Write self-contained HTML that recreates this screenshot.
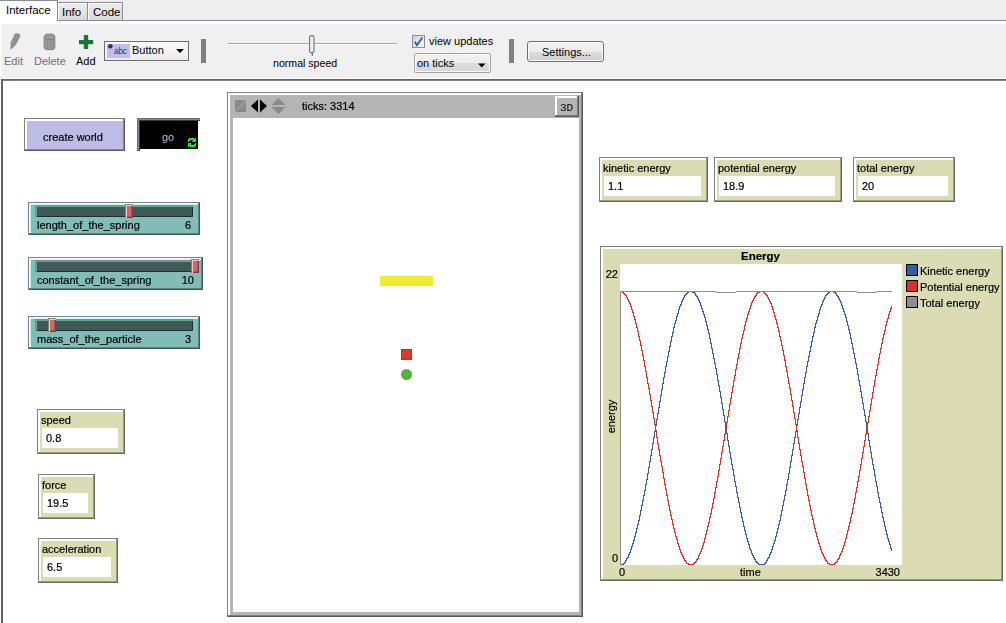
<!DOCTYPE html>
<html><head><meta charset="utf-8">
<style>
*{margin:0;padding:0;box-sizing:border-box}
html,body{width:1006px;height:623px;overflow:hidden;background:#fff;font-family:"Liberation Sans",sans-serif;font-size:11px;color:#000}
.a{position:absolute}
.t{position:absolute;white-space:nowrap;line-height:1}
/* tabs */
#top{left:0;top:0;width:1006px;height:20px;background:#eeeeee}
#tabline{left:57px;top:20px;width:949px;height:1px;background:#898d96}
#tabI{left:0;top:0;width:58px;height:21px;background:#fff;border-top:1px solid #898d96;border-right:1px solid #898d96}
.tab{top:2px;height:19px;border:1px solid #898d96;border-left:0;background:linear-gradient(#ededed,#d9d9d9);box-shadow:inset 1px 1px 0 #fff}
#toolbar{left:1px;top:24px;width:1005px;height:54px;background:#f0f0f0}
#tbline{left:1px;top:79px;width:1005px;height:1px;background:#646464}
#tbline2{left:1px;top:80px;width:1005px;height:1px;background:#7d828c}
#mainL{left:1px;top:79px;width:2px;height:544px;background:#646464}
/* bevel widgets */
.bev{position:absolute;border:1px solid #808080;border-right:0;border-bottom:0}
.bev>.in{position:absolute;left:0;top:0;right:0;bottom:0;border-top:2px solid #fff;border-left:2px solid #fff}
.mon .in{background:#dcdcb4;border-right:2px solid #66664e;border-bottom:2px solid #66664e}
.mon .lab{left:2px;top:3px}
.mon .val{position:absolute;left:2px;top:16px;background:#fff;height:20px}
.mon .val span{position:absolute;left:5px;top:6px;line-height:1}

.w{position:absolute;border-top:1px solid #808080;border-left:1px solid #808080}
</style></head><body>
<div class="a" id="top"></div>
<div class="a" id="tabI"></div>
<div class="a" id="tabline"></div>
<div class="a tab" style="left:58px;width:30px"></div>
<div class="a tab" style="left:88px;width:35px"></div>
<div class="t" style="left:6px;top:5px;font-size:11.5px">Interface</div>
<div class="t" style="left:62px;top:7px;font-size:11.5px">Info</div>
<div class="t" style="left:93px;top:7px;font-size:11.5px">Code</div>

<div class="a" id="toolbar"></div>
<div class="a" id="tbline"></div><div class="a" id="tbline2"></div>
<div class="a" id="mainL"></div>

<!-- toolbar -->
<svg class="a" style="left:0;top:30px" width="100" height="24" viewBox="0 30 100 24">
 <polygon points="11,49 11.2,42.4 15.2,34 18.7,34 20,35.7 15.5,44.7" fill="#939393" stroke="#808080" stroke-width="0.9" stroke-linejoin="round"/>
 <polygon points="46,34.2 53,34.2 54.8,36 54.8,48 53.3,49.6 45.7,49.6 44.2,48 44.2,36" fill="#9a9a9a" stroke="#7e7e7e" stroke-width="1"/>
 <path d="M44.8,38.8 Q49.5,40.6 54.3,38.8" stroke="#7e7e7e" stroke-width="1" fill="none"/>
 <path d="M47.3,41 V48.6 M50.3,41.2 V48.6 M52.8,41 V48.6" stroke="#888" stroke-width="0.8"/>
 <rect x="83.8" y="35" width="4.4" height="14" fill="#1c7830"/>
 <rect x="79" y="40" width="14.2" height="4.2" fill="#1c7830"/>
</svg>
<div class="t" style="left:4px;top:56px;color:#6e6e80">Edit</div>
<div class="t" style="left:34px;top:56px;color:#6e6e80">Delete</div>
<div class="t" style="left:76px;top:56px;color:#000">Add</div>

<div class="a" style="left:104px;top:41px;width:85px;height:20px;border:1px solid #6e6e6e;background:linear-gradient(#fafafa,#ebebeb)"></div>
<div class="a" style="left:107px;top:44px;width:23px;height:14px;background:#bfbfeb"></div>
<svg class="a" style="left:107px;top:43px" width="8" height="7"><circle cx="3.3" cy="3.3" r="2.3" fill="#303448"/><circle cx="3.3" cy="3.3" r="1" fill="#2030c0"/></svg>
<div class="t" style="left:114px;top:47px;font-size:8.5px;color:#383848;letter-spacing:-0.3px">abc</div>
<div class="t" style="left:132px;top:45px">Button</div>
<svg class="a" style="left:175px;top:48px" width="10" height="6"><polygon points="1,1 9,1 5,5" fill="#000"/></svg>
<div class="a" style="left:201px;top:39px;width:5px;height:24px;background:#808080"></div>

<div class="a" style="left:228px;top:43px;width:169px;height:1px;background:#a6a6a6"></div>
<div class="a" style="left:228px;top:44px;width:169px;height:1px;background:#fff"></div>
<svg class="a" style="left:306px;top:33px" width="12" height="24"><rect x="3.6" y="2.6" width="4.4" height="17" rx="1.8" fill="#fafafa" stroke="#6e6e6e" stroke-width="1.1"/><path d="M5.8,5 V17" stroke="#dcdcdc" stroke-width="0.8"/><path d="M6.3,20 V23" stroke="#6a6a6a" stroke-width="1.2"/></svg>
<div class="t" style="left:273px;top:58px;font-size:10.6px">normal speed</div>

<div class="a" style="left:412px;top:35px;width:13px;height:13px;border:1px solid #8e8f8f;background:linear-gradient(135deg,#cdd1d8,#f6f6f6)"></div>
<svg class="a" style="left:412px;top:35px" width="13" height="13"><path d="M2.8,6.8 L5,10.3 L10.3,2.6" stroke="#3450a0" stroke-width="1.7" fill="none"/></svg>
<div class="t" style="left:429px;top:36px">view updates</div>
<div class="a" style="left:414px;top:53px;width:77px;height:20px;border:1px solid #a3a3a3;border-radius:2px;background:linear-gradient(#f3f3f3 0,#ececec 50%,#dddddd 51%,#d6d6d6 100%);box-shadow:inset 0 0 0 1px #fafafa"></div>
<div class="t" style="left:417px;top:58px">on ticks</div>
<svg class="a" style="left:477px;top:62.5px" width="10" height="6"><polygon points="1,0.5 8.5,0.5 4.75,4.5" fill="#000"/></svg>
<div class="a" style="left:509px;top:39px;width:5px;height:24px;background:#808080"></div>

<div class="a" style="left:527px;top:41px;width:77px;height:21px;border:1px solid #707070;border-radius:3px;background:linear-gradient(#f2f2f2 0,#ebebeb 50%,#dddddd 51%,#cfcfcf 100%);box-shadow:inset 0 0 0 1px #fcfcfc"></div>
<div class="t" style="left:542px;top:47px">Settings...</div>



<div id="main" style="position:absolute;left:0;top:0;width:1006px;height:623px;will-change:transform;-webkit-text-stroke:0.2px"><div class="w" style="left:24px;top:118px;width:101px;height:33px;background:#bcbce6;box-shadow:inset -1px -1px 0 #5b5b70, inset -2px -2px 0 #8383a1, inset 1px 1px 0 #fff, inset 2px 2px 0 #fff"><div class="t" style="left:18px;top:13px">create world</div></div>

<div class="a" style="left:137px;top:118px;width:63px;height:33px;border-top:1px solid #6e6e6e;border-left:1px solid #6e6e6e;background:#000;box-shadow:inset 1px 1px 0 #8383a3, inset 2px 2px 0 #3a3a4a"></div>
<div class="a" style="left:198px;top:121px;width:2px;height:30px;background:#fff"></div>
<div class="a" style="left:140px;top:149px;width:60px;height:2px;background:#fff"></div>
<div class="t" style="left:162px;top:132px;color:#babae4;-webkit-text-stroke:0">go</div>
<svg class="a" style="left:188px;top:138px" width="8" height="9" fill="#00ff00" shape-rendering="crispEdges"><rect x="1" y="0" width="5" height="1"/><rect x="7" y="0" width="1" height="1"/><rect x="0" y="1" width="8" height="1"/><rect x="0" y="2" width="2" height="1"/><rect x="5" y="2" width="3" height="1"/><rect x="0" y="3" width="1" height="1"/><rect x="4" y="3" width="4" height="1"/><rect x="0" y="5" width="3" height="1"/><rect x="7" y="5" width="1" height="1"/><rect x="0" y="6" width="3" height="1"/><rect x="6" y="6" width="2" height="1"/><rect x="0" y="7" width="8" height="1"/><rect x="0" y="8" width="1" height="1"/><rect x="2" y="8" width="5" height="1"/></svg>
<div class="w" style="left:28px;top:202px;width:172px;height:33px;background:#82bcb7;box-shadow:inset -1px -1px 0 #3f5b59, inset -2px -2px 0 #5b8380, inset 1px 1px 0 #fff, inset 2px 2px 0 #b9ffff"></div>
<div class="a" style="left:35px;top:205px;width:158px;height:12px;border-top:1px solid #8a8a8a;border-left:1px solid #8a8a8a;background:#405a58;box-shadow:inset 1px 1px 0 #6f9f9a, inset -1px -1px 0 #1f2e2d"></div><div class="a" style="left:125px;top:204px;width:8px;height:14px;border-top:1px solid #808080;border-left:1px solid #808080;background:#cc6868;box-shadow:inset 1px 1px 0 #ffc4c4, inset -1px -1px 0 #7a3a3a, inset -2px -2px 0 #a85454"></div><div class="t" style="left:37px;top:220px">length_of_the_spring</div><div class="t" style="right:815px;top:220px">6</div>

<div class="w" style="left:28px;top:257px;width:175px;height:33px;background:#82bcb7;box-shadow:inset -1px -1px 0 #3f5b59, inset -2px -2px 0 #5b8380, inset 1px 1px 0 #fff, inset 2px 2px 0 #b9ffff"></div>
<div class="a" style="left:35px;top:260px;width:161px;height:12px;border-top:1px solid #8a8a8a;border-left:1px solid #8a8a8a;background:#405a58;box-shadow:inset 1px 1px 0 #6f9f9a, inset -1px -1px 0 #1f2e2d"></div><div class="a" style="left:191px;top:259px;width:8px;height:14px;border-top:1px solid #808080;border-left:1px solid #808080;background:#cc6868;box-shadow:inset 1px 1px 0 #ffc4c4, inset -1px -1px 0 #7a3a3a, inset -2px -2px 0 #a85454"></div><div class="t" style="left:37px;top:275px">constant_of_the_spring</div><div class="t" style="right:812px;top:275px">10</div>

<div class="w" style="left:28px;top:316px;width:172px;height:33px;background:#82bcb7;box-shadow:inset -1px -1px 0 #3f5b59, inset -2px -2px 0 #5b8380, inset 1px 1px 0 #fff, inset 2px 2px 0 #b9ffff"></div>
<div class="a" style="left:35px;top:319px;width:158px;height:12px;border-top:1px solid #8a8a8a;border-left:1px solid #8a8a8a;background:#405a58;box-shadow:inset 1px 1px 0 #6f9f9a, inset -1px -1px 0 #1f2e2d"></div><div class="a" style="left:48px;top:318px;width:8px;height:14px;border-top:1px solid #808080;border-left:1px solid #808080;background:#cc6868;box-shadow:inset 1px 1px 0 #ffc4c4, inset -1px -1px 0 #7a3a3a, inset -2px -2px 0 #a85454"></div><div class="t" style="left:37px;top:334px">mass_of_the_particle</div><div class="t" style="right:815px;top:334px">3</div>

<div class="w" style="left:37px;top:409px;width:88px;height:45px;background:#dcdcb4;box-shadow:inset -1px -1px 0 #6b6b58, inset -2px -2px 0 #9a9a7e, inset 1px 1px 0 #fff, inset 2px 2px 0 #fff"><div class="t" style="left:3px;top:5px">speed</div><div class="a" style="left:4px;top:18px;width:76px;height:20px;background:#fff"><div class="t" style="left:4px;top:5px">0.8</div></div></div>

<div class="w" style="left:38px;top:474px;width:57px;height:45px;background:#dcdcb4;box-shadow:inset -1px -1px 0 #6b6b58, inset -2px -2px 0 #9a9a7e, inset 1px 1px 0 #fff, inset 2px 2px 0 #fff"><div class="t" style="left:3px;top:5px">force</div><div class="a" style="left:4px;top:18px;width:45px;height:20px;background:#fff"><div class="t" style="left:4px;top:5px">19.5</div></div></div>

<div class="w" style="left:38px;top:538px;width:80px;height:45px;background:#dcdcb4;box-shadow:inset -1px -1px 0 #6b6b58, inset -2px -2px 0 #9a9a7e, inset 1px 1px 0 #fff, inset 2px 2px 0 #fff"><div class="t" style="left:3px;top:5px">acceleration</div><div class="a" style="left:4px;top:18px;width:68px;height:20px;background:#fff"><div class="t" style="left:4px;top:5px">6.5</div></div></div>

<div class="w" style="left:599px;top:157px;width:109px;height:45px;background:#dcdcb4;box-shadow:inset -1px -1px 0 #6b6b58, inset -2px -2px 0 #9a9a7e, inset 1px 1px 0 #fff, inset 2px 2px 0 #fff"><div class="t" style="left:3px;top:5px">kinetic energy</div><div class="a" style="left:4px;top:18px;width:97px;height:20px;background:#fff"><div class="t" style="left:4px;top:5px">1.1</div></div></div>

<div class="w" style="left:714px;top:157px;width:128px;height:45px;background:#dcdcb4;box-shadow:inset -1px -1px 0 #6b6b58, inset -2px -2px 0 #9a9a7e, inset 1px 1px 0 #fff, inset 2px 2px 0 #fff"><div class="t" style="left:3px;top:5px">potential energy</div><div class="a" style="left:4px;top:18px;width:116px;height:20px;background:#fff"><div class="t" style="left:4px;top:5px">18.9</div></div></div>

<div class="w" style="left:853px;top:157px;width:102px;height:45px;background:#dcdcb4;box-shadow:inset -1px -1px 0 #6b6b58, inset -2px -2px 0 #9a9a7e, inset 1px 1px 0 #fff, inset 2px 2px 0 #fff"><div class="t" style="left:3px;top:5px">total energy</div><div class="a" style="left:4px;top:18px;width:90px;height:20px;background:#fff"><div class="t" style="left:4px;top:5px">20</div></div></div>

<div class="w" style="left:227px;top:92px;width:356px;height:525px;background:#b4b4b4;box-shadow:inset -1px -1px 0 #585858, inset -2px -2px 0 #7e7e7e, inset 2px 2px 0 #fff"></div>
<div class="a" style="left:233px;top:118px;width:346px;height:494px;background:#fff"></div>
<svg class="a" style="left:233px;top:96px" width="56" height="20" viewBox="233 96 56 20">
 <polygon points="235,100 246,100 235,111" fill="#8a8a8a"/>
 <polygon points="246,101 246,112 235,112" fill="#8a8a8a"/>
 <polygon points="251,106 258,99.5 258,112.5" fill="#000"/>
 <polygon points="267,106 260,99.5 260,112.5" fill="#000"/>
 <polygon points="278.5,98 285.5,105 271.5,105" fill="#8a8a8a"/>
 <polygon points="278.5,114 285.5,107 271.5,107" fill="#8a8a8a"/>
</svg>
<div class="t" style="left:302px;top:101px">ticks: 3314</div>
<div class="a" style="left:555px;top:96px;width:24px;height:21px;background:#b4b4b4;box-shadow:inset -1px -1px 0 #585858, inset -2px -2px 0 #7e7e7e, inset 2px 2px 0 #fff"><div class="t" style="left:5px;top:7px;font-family:'Liberation Mono',monospace;font-size:11px;-webkit-text-stroke:0">3D</div></div>
<div class="a" style="left:380px;top:276px;width:53px;height:10px;background:#eded2d"></div>
<div class="a" style="left:401px;top:349px;width:11px;height:11px;background:#d83a30;border:1px solid #c82822"></div>
<div class="a" style="left:401px;top:369px;width:11px;height:11px;border-radius:50%;background:#59b03c"></div>
<div class="w" style="left:600px;top:246px;width:403px;height:335px;background:#dcdcb4;box-shadow:inset -1px -1px 0 #6b6b58, inset -2px -2px 0 #9a9a7e, inset 1px 1px 0 #fff, inset 2px 2px 0 #fff"></div>

<div class="a" style="left:620px;top:264px;width:282px;height:301px;background:#fff"></div>
<div class="t" style="left:741px;top:251px;font-weight:bold;font-size:11.5px">Energy</div>
<div class="t" style="right:388px;top:269px">22</div>
<div class="t" style="right:388px;top:553px">0</div>
<div class="t" style="left:619px;top:567px">0</div>
<div class="t" style="left:740px;top:567px">time</div>
<div class="t" style="right:106px;top:567px">3430</div>
<div class="t" style="left:593px;top:411px;width:36px;text-align:center;transform:rotate(-90deg)">energy</div>
<div class="a" style="left:906px;top:264px;width:12px;height:12px;background:#345da9;border:1px solid #000"></div>
<div class="t" style="left:920px;top:266px">Kinetic energy</div>
<div class="a" style="left:906px;top:280px;width:12px;height:12px;background:#d73229;border:1px solid #000"></div>
<div class="t" style="left:920px;top:282px">Potential energy</div>
<div class="a" style="left:906px;top:296px;width:12px;height:12px;background:#8d8d8d;border:1px solid #000"></div>
<div class="t" style="left:920px;top:298px">Total energy</div>
<svg class="a" style="left:600px;top:246px" width="403" height="335"><path d="M20,318h1v1h-1zM21,318h1v1h-1zM22,318h1v1h-1zM23,317h1v2h-1zM24,316h1v2h-1zM25,314h1v3h-1zM26,312h1v3h-1zM27,311h1v2h-1zM28,308h1v4h-1zM29,306h1v3h-1zM30,303h1v4h-1zM31,300h1v4h-1zM32,297h1v4h-1zM33,294h1v4h-1zM34,290h1v5h-1zM35,286h1v5h-1zM36,282h1v5h-1zM37,278h1v5h-1zM38,274h1v5h-1zM39,269h1v6h-1zM40,264h1v6h-1zM41,259h1v6h-1zM42,254h1v6h-1zM43,249h1v6h-1zM44,244h1v6h-1zM45,238h1v7h-1zM46,233h1v6h-1zM47,227h1v7h-1zM48,221h1v7h-1zM49,215h1v7h-1zM50,209h1v7h-1zM51,203h1v7h-1zM52,197h1v7h-1zM53,191h1v7h-1zM54,185h1v7h-1zM55,179h1v7h-1zM56,173h1v7h-1zM57,167h1v7h-1zM58,161h1v7h-1zM59,155h1v7h-1zM60,149h1v7h-1zM61,143h1v7h-1zM62,137h1v7h-1zM63,131h1v7h-1zM64,126h1v6h-1zM65,120h1v7h-1zM66,115h1v6h-1zM67,110h1v6h-1zM68,105h1v6h-1zM69,100h1v6h-1zM70,95h1v6h-1zM71,90h1v6h-1zM72,86h1v5h-1zM73,81h1v6h-1zM74,77h1v5h-1zM75,74h1v4h-1zM76,70h1v5h-1zM77,67h1v4h-1zM78,63h1v5h-1zM79,60h1v4h-1zM80,58h1v3h-1zM81,55h1v4h-1zM82,53h1v3h-1zM83,51h1v3h-1zM84,49h1v3h-1zM85,48h1v2h-1zM86,47h1v2h-1zM87,46h1v2h-1zM88,45h1v2h-1zM89,45h1v1h-1zM90,45h1v1h-1zM91,45h1v1h-1zM92,45h1v2h-1zM93,46h1v1h-1zM94,46h1v2h-1zM95,47h1v3h-1zM96,49h1v2h-1zM97,50h1v3h-1zM98,52h1v3h-1zM99,54h1v3h-1zM100,56h1v4h-1zM101,59h1v4h-1zM102,62h1v4h-1zM103,65h1v4h-1zM104,68h1v4h-1zM105,71h1v5h-1zM106,75h1v5h-1zM107,79h1v5h-1zM108,83h1v5h-1zM109,87h1v6h-1zM110,92h1v6h-1zM111,97h1v6h-1zM112,102h1v6h-1zM113,107h1v6h-1zM114,112h1v6h-1zM115,117h1v6h-1zM116,122h1v7h-1zM117,128h1v7h-1zM118,134h1v6h-1zM119,139h1v7h-1zM120,145h1v7h-1zM121,151h1v7h-1zM122,157h1v7h-1zM123,163h1v7h-1zM124,169h1v7h-1zM125,175h1v7h-1zM126,181h1v7h-1zM127,187h1v8h-1zM128,194h1v7h-1zM129,200h1v7h-1zM130,206h1v7h-1zM131,212h1v7h-1zM132,218h1v6h-1zM133,223h1v7h-1zM134,229h1v7h-1zM135,235h1v6h-1zM136,240h1v7h-1zM137,246h1v6h-1zM138,251h1v6h-1zM139,256h1v6h-1zM140,261h1v6h-1zM141,266h1v6h-1zM142,271h1v5h-1zM143,275h1v6h-1zM144,280h1v5h-1zM145,284h1v5h-1zM146,288h1v5h-1zM147,292h1v4h-1zM148,295h1v4h-1zM149,298h1v5h-1zM150,302h1v3h-1zM151,304h1v4h-1zM152,307h1v3h-1zM153,309h1v3h-1zM154,311h1v3h-1zM155,313h1v3h-1zM156,315h1v2h-1zM157,316h1v2h-1zM158,317h1v2h-1zM159,318h1v1h-1zM160,318h1v1h-1zM161,318h1v1h-1zM162,318h1v1h-1zM163,318h1v1h-1zM164,317h1v2h-1zM165,316h1v2h-1zM166,314h1v3h-1zM167,312h1v3h-1zM168,311h1v2h-1zM169,308h1v4h-1zM170,306h1v3h-1zM171,303h1v4h-1zM172,300h1v4h-1zM173,297h1v4h-1zM174,294h1v4h-1zM175,290h1v5h-1zM176,286h1v5h-1zM177,282h1v5h-1zM178,278h1v5h-1zM179,274h1v5h-1zM180,269h1v6h-1zM181,264h1v6h-1zM182,259h1v6h-1zM183,254h1v6h-1zM184,249h1v6h-1zM185,244h1v6h-1zM186,238h1v7h-1zM187,233h1v6h-1zM188,227h1v7h-1zM189,221h1v7h-1zM190,215h1v7h-1zM191,209h1v7h-1zM192,203h1v7h-1zM193,197h1v7h-1zM194,191h1v7h-1zM195,185h1v7h-1zM196,179h1v7h-1zM197,173h1v7h-1zM198,167h1v7h-1zM199,161h1v7h-1zM200,155h1v7h-1zM201,149h1v7h-1zM202,143h1v7h-1zM203,137h1v7h-1zM204,131h1v7h-1zM205,126h1v6h-1zM206,120h1v7h-1zM207,115h1v6h-1zM208,110h1v6h-1zM209,105h1v6h-1zM210,100h1v6h-1zM211,95h1v6h-1zM212,90h1v6h-1zM213,86h1v5h-1zM214,81h1v6h-1zM215,77h1v5h-1zM216,74h1v4h-1zM217,70h1v5h-1zM218,67h1v4h-1zM219,63h1v5h-1zM220,60h1v4h-1zM221,58h1v3h-1zM222,55h1v4h-1zM223,53h1v3h-1zM224,51h1v3h-1zM225,49h1v3h-1zM226,48h1v2h-1zM227,47h1v2h-1zM228,46h1v2h-1zM229,45h1v2h-1zM230,45h1v1h-1zM231,45h1v1h-1zM232,45h1v1h-1zM233,45h1v2h-1zM234,46h1v1h-1zM235,46h1v2h-1zM236,47h1v3h-1zM237,49h1v2h-1zM238,50h1v3h-1zM239,52h1v3h-1zM240,54h1v3h-1zM241,56h1v4h-1zM242,59h1v4h-1zM243,62h1v4h-1zM244,65h1v4h-1zM245,68h1v4h-1zM246,71h1v5h-1zM247,75h1v5h-1zM248,79h1v5h-1zM249,83h1v5h-1zM250,87h1v6h-1zM251,92h1v6h-1zM252,97h1v6h-1zM253,102h1v6h-1zM254,107h1v6h-1zM255,112h1v6h-1zM256,117h1v6h-1zM257,122h1v7h-1zM258,128h1v7h-1zM259,134h1v6h-1zM260,139h1v7h-1zM261,145h1v7h-1zM262,151h1v7h-1zM263,157h1v7h-1zM264,163h1v7h-1zM265,169h1v7h-1zM266,175h1v7h-1zM267,181h1v7h-1zM268,187h1v8h-1zM269,194h1v7h-1zM270,200h1v7h-1zM271,206h1v7h-1zM272,212h1v7h-1zM273,218h1v6h-1zM274,223h1v7h-1zM275,229h1v7h-1zM276,235h1v6h-1zM277,240h1v7h-1zM278,246h1v6h-1zM279,251h1v6h-1zM280,256h1v6h-1zM281,261h1v6h-1zM282,266h1v6h-1zM283,271h1v5h-1zM284,275h1v6h-1zM285,280h1v5h-1zM286,284h1v5h-1zM287,288h1v5h-1zM288,292h1v4h-1zM289,295h1v4h-1zM290,298h1v5h-1zM291,302h1v3h-1z" fill="#345da9" shape-rendering="crispEdges"/><path d="M20,45h1v1h-1zM21,45h1v1h-1zM22,45h1v2h-1zM23,46h1v2h-1zM24,47h1v2h-1zM25,48h1v2h-1zM26,49h1v3h-1zM27,51h1v3h-1zM28,53h1v3h-1zM29,55h1v3h-1zM30,57h1v4h-1zM31,60h1v4h-1zM32,63h1v4h-1zM33,66h1v5h-1zM34,70h1v4h-1zM35,73h1v5h-1zM36,77h1v5h-1zM37,81h1v5h-1zM38,85h1v6h-1zM39,90h1v5h-1zM40,94h1v6h-1zM41,99h1v6h-1zM42,104h1v6h-1zM43,109h1v6h-1zM44,114h1v7h-1zM45,120h1v6h-1zM46,125h1v7h-1zM47,131h1v7h-1zM48,137h1v6h-1zM49,142h1v7h-1zM50,148h1v7h-1zM51,154h1v7h-1zM52,160h1v7h-1zM53,166h1v7h-1zM54,172h1v7h-1zM55,178h1v7h-1zM56,184h1v8h-1zM57,191h1v7h-1zM58,197h1v7h-1zM59,203h1v7h-1zM60,209h1v7h-1zM61,215h1v6h-1zM62,220h1v7h-1zM63,226h1v7h-1zM64,232h1v7h-1zM65,238h1v6h-1zM66,243h1v7h-1zM67,249h1v6h-1zM68,254h1v6h-1zM69,259h1v6h-1zM70,264h1v6h-1zM71,269h1v5h-1zM72,273h1v6h-1zM73,278h1v5h-1zM74,282h1v5h-1zM75,286h1v5h-1zM76,290h1v4h-1zM77,293h1v5h-1zM78,297h1v4h-1zM79,300h1v4h-1zM80,303h1v4h-1zM81,306h1v3h-1zM82,308h1v3h-1zM83,310h1v3h-1zM84,312h1v3h-1zM85,314h1v2h-1zM86,315h1v3h-1zM87,317h1v1h-1zM88,317h1v2h-1zM89,318h1v1h-1zM90,318h1v1h-1zM91,318h1v1h-1zM92,318h1v1h-1zM93,317h1v2h-1zM94,316h1v2h-1zM95,315h1v2h-1zM96,313h1v3h-1zM97,312h1v2h-1zM98,309h1v4h-1zM99,307h1v3h-1zM100,305h1v3h-1zM101,302h1v4h-1zM102,299h1v4h-1zM103,296h1v4h-1zM104,292h1v5h-1zM105,288h1v5h-1zM106,284h1v5h-1zM107,280h1v5h-1zM108,276h1v5h-1zM109,271h1v6h-1zM110,267h1v5h-1zM111,262h1v6h-1zM112,257h1v6h-1zM113,252h1v6h-1zM114,246h1v7h-1zM115,241h1v6h-1zM116,235h1v7h-1zM117,230h1v6h-1zM118,224h1v7h-1zM119,218h1v7h-1zM120,212h1v7h-1zM121,206h1v7h-1zM122,200h1v7h-1zM123,194h1v7h-1zM124,188h1v7h-1zM125,182h1v7h-1zM126,176h1v7h-1zM127,170h1v7h-1zM128,164h1v7h-1zM129,158h1v7h-1zM130,152h1v7h-1zM131,146h1v7h-1zM132,140h1v7h-1zM133,134h1v7h-1zM134,129h1v6h-1zM135,123h1v7h-1zM136,118h1v6h-1zM137,112h1v7h-1zM138,107h1v6h-1zM139,102h1v6h-1zM140,97h1v6h-1zM141,92h1v6h-1zM142,88h1v5h-1zM143,84h1v5h-1zM144,79h1v6h-1zM145,75h1v5h-1zM146,72h1v4h-1zM147,68h1v5h-1zM148,65h1v4h-1zM149,62h1v4h-1zM150,59h1v4h-1zM151,56h1v4h-1zM152,54h1v3h-1zM153,52h1v3h-1zM154,50h1v3h-1zM155,49h1v2h-1zM156,47h1v3h-1zM157,46h1v2h-1zM158,46h1v1h-1zM159,45h1v2h-1zM160,45h1v1h-1zM161,45h1v1h-1zM162,45h1v1h-1zM163,45h1v2h-1zM164,46h1v2h-1zM165,47h1v2h-1zM166,48h1v2h-1zM167,49h1v3h-1zM168,51h1v3h-1zM169,53h1v3h-1zM170,55h1v3h-1zM171,57h1v4h-1zM172,60h1v4h-1zM173,63h1v4h-1zM174,66h1v5h-1zM175,70h1v4h-1zM176,73h1v5h-1zM177,77h1v5h-1zM178,81h1v5h-1zM179,85h1v6h-1zM180,90h1v5h-1zM181,94h1v6h-1zM182,99h1v6h-1zM183,104h1v6h-1zM184,109h1v6h-1zM185,114h1v7h-1zM186,120h1v6h-1zM187,125h1v7h-1zM188,131h1v7h-1zM189,137h1v6h-1zM190,142h1v7h-1zM191,148h1v7h-1zM192,154h1v7h-1zM193,160h1v7h-1zM194,166h1v7h-1zM195,172h1v7h-1zM196,178h1v7h-1zM197,184h1v8h-1zM198,191h1v7h-1zM199,197h1v7h-1zM200,203h1v7h-1zM201,209h1v7h-1zM202,215h1v6h-1zM203,220h1v7h-1zM204,226h1v7h-1zM205,232h1v7h-1zM206,238h1v6h-1zM207,243h1v7h-1zM208,249h1v6h-1zM209,254h1v6h-1zM210,259h1v6h-1zM211,264h1v6h-1zM212,269h1v5h-1zM213,273h1v6h-1zM214,278h1v5h-1zM215,282h1v5h-1zM216,286h1v5h-1zM217,290h1v4h-1zM218,293h1v5h-1zM219,297h1v4h-1zM220,300h1v4h-1zM221,303h1v4h-1zM222,306h1v3h-1zM223,308h1v3h-1zM224,310h1v3h-1zM225,312h1v3h-1zM226,314h1v2h-1zM227,315h1v3h-1zM228,317h1v1h-1zM229,317h1v2h-1zM230,318h1v1h-1zM231,318h1v1h-1zM232,318h1v1h-1zM233,318h1v1h-1zM234,317h1v2h-1zM235,316h1v2h-1zM236,315h1v2h-1zM237,313h1v3h-1zM238,312h1v2h-1zM239,309h1v4h-1zM240,307h1v3h-1zM241,305h1v3h-1zM242,302h1v4h-1zM243,299h1v4h-1zM244,296h1v4h-1zM245,292h1v5h-1zM246,288h1v5h-1zM247,284h1v5h-1zM248,280h1v5h-1zM249,276h1v5h-1zM250,271h1v6h-1zM251,267h1v5h-1zM252,262h1v6h-1zM253,257h1v6h-1zM254,252h1v6h-1zM255,246h1v7h-1zM256,241h1v6h-1zM257,235h1v7h-1zM258,230h1v6h-1zM259,224h1v7h-1zM260,218h1v7h-1zM261,212h1v7h-1zM262,206h1v7h-1zM263,200h1v7h-1zM264,194h1v7h-1zM265,188h1v7h-1zM266,182h1v7h-1zM267,176h1v7h-1zM268,170h1v7h-1zM269,164h1v7h-1zM270,158h1v7h-1zM271,152h1v7h-1zM272,146h1v7h-1zM273,140h1v7h-1zM274,134h1v7h-1zM275,129h1v6h-1zM276,123h1v7h-1zM277,118h1v6h-1zM278,112h1v7h-1zM279,107h1v6h-1zM280,102h1v6h-1zM281,97h1v6h-1zM282,92h1v6h-1zM283,88h1v5h-1zM284,84h1v5h-1zM285,79h1v6h-1zM286,75h1v5h-1zM287,72h1v4h-1zM288,68h1v5h-1zM289,65h1v4h-1zM290,62h1v4h-1zM291,60h1v3h-1z" fill="#d73229" shape-rendering="crispEdges"/><path d="M20.5,46 V319" stroke="#8d8d8d" stroke-width="1"/><path d="M20,45.5 H116.4 M136,45.5 H257 M276.5,45.5 H292" stroke="#8d8d8d" stroke-width="1"/><path d="M116.4,46.5 H136 M257,46.5 H276.5" stroke="#8d8d8d" stroke-width="1"/></svg></div>
</body></html>
